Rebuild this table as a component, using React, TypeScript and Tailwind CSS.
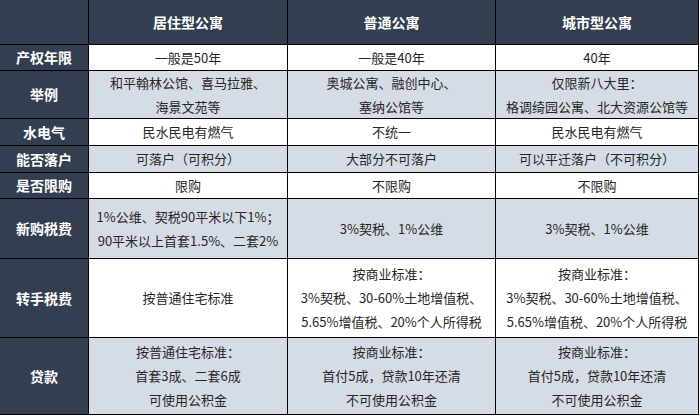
const headers = ['', '居住型公寓', '普通公寓', '城市型公寓'];

const rows: { label: string; h: string; cells: string[][] }[] = [
  { label: '产权年限', h: 'h-[25px]', cells: [['一般是50年'], ['一般是40年'], ['40年']] },
  {
    label: '举例',
    h: 'h-[47px]',
    cells: [
      ['和平翰林公馆、喜马拉雅、', '海景文苑等'],
      ['奥城公寓、融创中心、', '塞纳公馆等'],
      ['仅限新八大里：', '格调绮园公寓、北大资源公馆等'],
    ],
  },
  { label: '水电气', h: 'h-[26px]', cells: [['民水民电有燃气'], ['不统一'], ['民水民电有燃气']] },
  { label: '能否落户', h: 'h-[26px]', cells: [['可落户（可积分）'], ['大部分不可落户'], ['可以平迁落户（不可积分）']] },
  { label: '是否限购', h: 'h-[25px]', cells: [['限购'], ['不限购'], ['不限购']] },
  {
    label: '新购税费',
    h: 'h-[59px]',
    cells: [
      ['1%公维、契税90平米以下1%；', '90平米以上首套1.5%、二套2%'],
      ['3%契税、1%公维'],
      ['3%契税、1%公维'],
    ],
  },
  {
    label: '转手税费',
    h: 'h-[78px]',
    cells: [
      ['按普通住宅标准'],
      ['按商业标准：', '3%契税、30-60%土地增值税、', '5.65%增值税、20%个人所得税'],
      ['按商业标准：', '3%契税、30-60%土地增值税、', '5.65%增值税、20%个人所得税'],
    ],
  },
  {
    label: '贷款',
    h: 'h-[76px]',
    cells: [
      ['按普通住宅标准：', '首套3成、二套6成', '可使用公积金'],
      ['按商业标准：', '首付5成，贷款10年还清', '不可使用公积金'],
      ['按商业标准：', '首付5成，贷款10年还清', '不可使用公积金'],
    ],
  },
];

export default function App() {
  return (
    <div className="w-[700px] h-[416px] bg-white font-['Noto_Sans_CJK_SC','Microsoft_YaHei',sans-serif]">
      <div className="grid w-fit grid-cols-[88px_198px_207px_202px] gap-px bg-black border-r border-b border-black">
        {headers.map((t, i) => (
          <div
            key={i}
            className="h-[44px] bg-[#333f50] flex items-center justify-center text-[14px] font-bold text-white"
          >
            {t}
          </div>
        ))}
        {rows.map((r, ri) => {
          const bg = ri % 2 === 0 ? 'bg-white' : 'bg-[#d6dce5]';
          return [
            <div
              key={r.label}
              className={`${r.h} bg-[#333f50] flex items-center justify-center text-[14px] font-bold text-white`}
            >
              {r.label}
            </div>,
            ...r.cells.map((lines, ci) => (
              <div
                key={r.label + ci}
                className={`${r.h} ${bg} flex flex-col items-center justify-center text-[13px] leading-[24px] text-[#262626] whitespace-nowrap`}
              >
                {lines.map((l, li) => (
                  <span key={li}>{l}</span>
                ))}
              </div>
            )),
          ];
        })}
      </div>
    </div>
  );
}
